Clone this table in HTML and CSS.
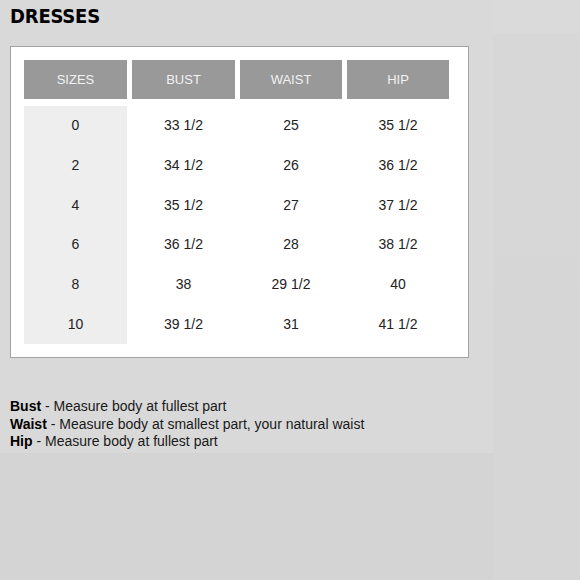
FILE: index.html
```html
<!DOCTYPE html>
<html>
<head>
<meta charset="utf-8">
<link rel="stylesheet" href="styles.css">
</head>
<body>
<div class="layout">
  <main class="page">
    <h1 class="title">DRESSES</h1>
    <section class="box">
      <div class="chart">
        <div class="head">SIZES</div>
        <div class="head">BUST</div>
        <div class="head">WAIST</div>
        <div class="head">HIP</div>
        <div class="body">
          <div class="size">0</div><div class="val">33 1/2</div><div class="val">25</div><div class="val">35 1/2</div>
          <div class="size">2</div><div class="val">34 1/2</div><div class="val">26</div><div class="val">36 1/2</div>
          <div class="size">4</div><div class="val">35 1/2</div><div class="val">27</div><div class="val">37 1/2</div>
          <div class="size">6</div><div class="val">36 1/2</div><div class="val">28</div><div class="val">38 1/2</div>
          <div class="size">8</div><div class="val">38</div><div class="val">29 1/2</div><div class="val">40</div>
          <div class="size">10</div><div class="val">39 1/2</div><div class="val">31</div><div class="val">41 1/2</div>
        </div>
      </div>
    </section>
    <div class="legend">
      <p><b>Bust</b> - Measure body at fullest part</p>
      <p><b>Waist</b> - Measure body at smallest part, your natural waist</p>
      <p><b>Hip</b> - Measure body at fullest part</p>
    </div>
  </main>
  <aside class="side"></aside>
</div>
</body>
</html>
```

FILE: styles.css
```css
html, body {
  margin: 0;
  padding: 0;
}
body {
  background: #d4d4d4;
  font-family: "Liberation Sans", Arial, sans-serif;
  width: 580px;
  height: 580px;
  overflow: hidden;
}
.layout {
  display: flex;
  height: 580px;
}
.page {
  width: 493px;
  height: 453px;
  background: #d9d9d9;
  padding: 5px 0 0 10px;
  box-sizing: border-box;
}
.side {
  flex: 1;
  background: linear-gradient(#dadada 0, #dadada 33px, #d7d7d7 34px, #d6d6d6 100%);
}
.title {
  margin: 0;
  font-family: "DejaVu Sans Condensed", "DejaVu Sans", sans-serif;
  font-stretch: condensed;
  font-weight: bold;
  font-size: 20px;
  line-height: 23px;
  letter-spacing: -0.2px;
  color: #000;
}
.box {
  margin-top: 18px;
  width: 459px;
  height: 312px;
  box-sizing: border-box;
  background: #fff;
  border: 1px solid #a3a3a3;
  padding: 13px 0 13px 13px;
}
.chart {
  display: grid;
  grid-template-columns: 103px 103px 102px 102px;
  grid-template-rows: 39px 238px;
  column-gap: 5px;
  row-gap: 7px;
  font-size: 13px;
}
.head {
  background: #999999;
  color: #f2f2f2;
  display: flex;
  align-items: center;
  justify-content: center;
}
.body {
  grid-column: 1 / -1;
  display: grid;
  grid-template-columns: 103px 103px 102px 102px;
  grid-template-rows: repeat(6, 1fr);
  column-gap: 5px;
  color: #222;
  font-size: 14px;
}
.size, .val {
  display: flex;
  align-items: center;
  justify-content: center;
}
.val {
  padding-bottom: 1px;
}
.size {
  background: #eeeeee;
  padding-bottom: 1px;
}
.legend {
  margin-top: 40px;
  font-size: 14px;
  line-height: 17.7px;
  color: #1a1a1a;
}
.legend p {
  margin: 0;
}
.legend b {
  color: #000;
}
```
